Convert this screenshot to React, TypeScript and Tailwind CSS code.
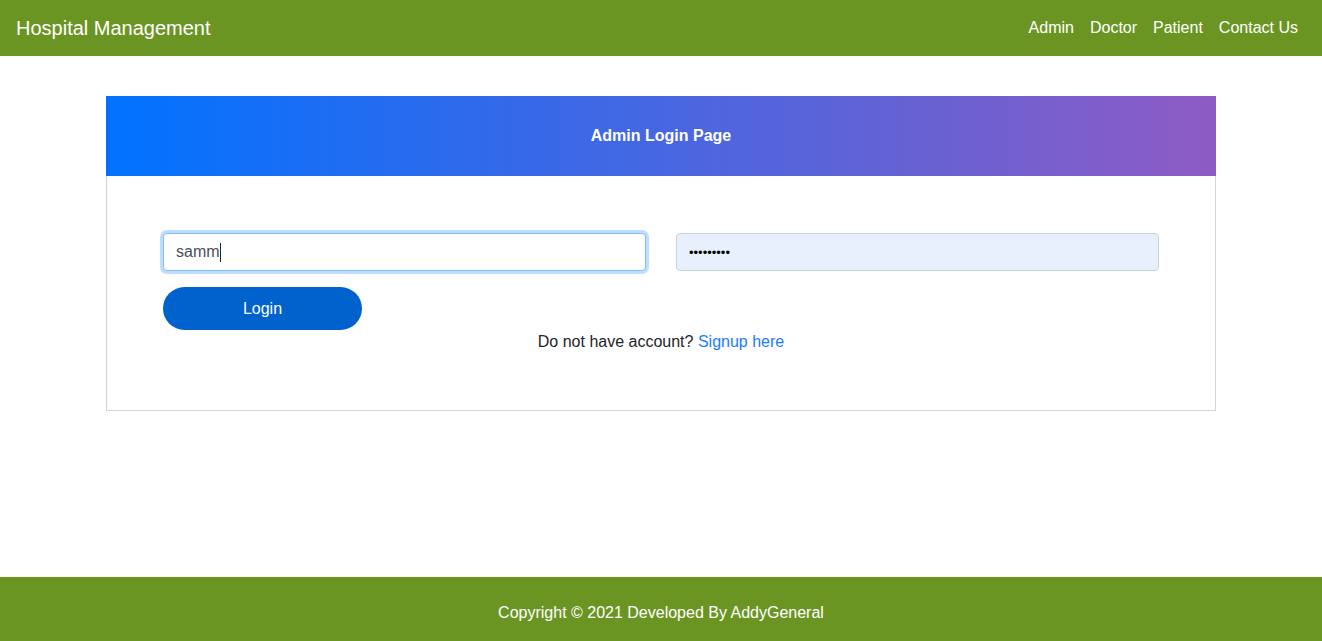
import React from "react";

export default function App() {
  return (
    <div
      className="min-h-screen flex flex-col bg-white text-[#212529]"
      style={{ fontFamily: '"Liberation Sans", Arial, sans-serif' }}
    >
      <nav className="h-[56px] bg-[#6b9523] flex items-center justify-between px-4 shrink-0">
        <span className="text-[20px] text-white leading-[30px]">Hospital Management</span>
        <div className="flex items-center text-white text-[16px]">
          <a className="px-2">Admin</a>
          <a className="px-2">Doctor</a>
          <a className="px-2">Patient</a>
          <a className="px-2">Contact Us</a>
        </div>
      </nav>

      <main className="flex-1">
        <div className="w-[1110px] mx-auto mt-[40px]">
          <div className="h-[80px] bg-[linear-gradient(to_right,#0072ff,#8e5bc4)] flex items-center justify-center">
            <span className="text-white font-bold text-[16px]">Admin Login Page</span>
          </div>
          <div className="border border-t-0 border-[#d1d5db] px-[56px] pt-[57px] pb-[56px]">
            <div className="grid grid-cols-2 gap-[30px]">
              <div className="h-[38px] rounded-[4px] border border-[#80bdff] shadow-[0_0_0_3px_rgba(0,123,255,0.25)] bg-white flex items-center px-[12px] text-[16px] text-[#495057]">
                <span>samm</span>
                <span className="inline-block w-px h-[19px] bg-[#222]" />
              </div>
              <input
                type="password"
                readOnly
                value="123456789"
                className="h-[38px] rounded-[4px] border border-[#ced4da] bg-[#e8f0fe] px-[12px] text-[13px] text-black outline-none"
              />
            </div>
            <button className="mt-[16px] w-[199px] h-[43px] rounded-full bg-[#0062cc] text-white text-[16px]">
              Login
            </button>
            <p className="text-center text-[16px] leading-[24px] mt-[0px]">
              Do not have account? <a className="text-[#1a7cff]">Signup here</a>
            </p>
          </div>
        </div>
      </main>

      <footer className="h-[64px] bg-[#6b9523] flex items-center justify-center shrink-0">
        <span className="text-white text-[16px] pt-[7px]">Copyright © 2021 Developed By AddyGeneral</span>
      </footer>
    </div>
  );
}
